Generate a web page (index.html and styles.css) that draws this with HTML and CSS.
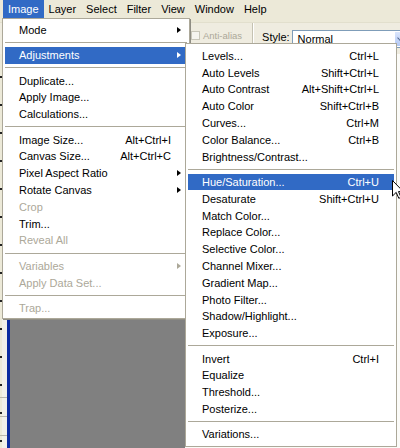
FILE: index.html
```html
<!DOCTYPE html>
<html>
   <head>
      <meta charset="UTF-8">
      <title>Image menu</title>
      <link rel="stylesheet" href="styles.css">
   </head>
   <body>
      <div class="screen">
         <div class="menubar">
            <span class="open">Image</span>
            <span>Layer</span>
            <span>Select</span>
            <span>Filter</span>
            <span>View</span>
            <span>Window</span>
            <span>Help</span>
         </div>
         <div class="optbar">
            <div class="tools"></div>
            <div class="check"><span class="box"></span>Anti-alias</div>
            <span class="vsep"></span>
            <span class="style-label">Style:</span>
            <div class="combo">Normal<span class="combo-btn"></span></div>
         </div>
         <div class="workspace">
            <div class="dock">
               <span></span><span></span><span></span>
            </div>
            <div class="doc-edge"></div>
            <div class="canvas"></div>
            <div class="palettes"></div>
         </div>

         <!-- Image menu -->
         <div class="menu main">
            <div class="item">Mode<i></i><b class="arrow"></b></div>
            <div class="sep"></div>
            <div class="item hot">Adjustments<i></i><b class="arrow"></b></div>
            <div class="sep"></div>
            <div class="item">Duplicate...</div>
            <div class="item">Apply Image...</div>
            <div class="item">Calculations...</div>
            <div class="sep"></div>
            <div class="item">Image Size...<i>Alt+Ctrl+I</i></div>
            <div class="item">Canvas Size...<i>Alt+Ctrl+C</i></div>
            <div class="item">Pixel Aspect Ratio<i></i><b class="arrow"></b></div>
            <div class="item">Rotate Canvas<i></i><b class="arrow"></b></div>
            <div class="item off">Crop</div>
            <div class="item">Trim...</div>
            <div class="item off">Reveal All</div>
            <div class="sep"></div>
            <div class="item off">Variables<i></i><b class="arrow"></b></div>
            <div class="item off">Apply Data Set...</div>
            <div class="sep"></div>
            <div class="item off">Trap...</div>
         </div>

         <!-- Adjustments submenu -->
         <div class="menu sub">
            <div class="item">Levels...<i>Ctrl+L</i></div>
            <div class="item">Auto Levels<i>Shift+Ctrl+L</i></div>
            <div class="item">Auto Contrast<i>Alt+Shift+Ctrl+L</i></div>
            <div class="item">Auto Color<i>Shift+Ctrl+B</i></div>
            <div class="item">Curves...<i>Ctrl+M</i></div>
            <div class="item">Color Balance...<i>Ctrl+B</i></div>
            <div class="item">Brightness/Contrast...</div>
            <div class="sep"></div>
            <div class="item hot">Hue/Saturation...<i>Ctrl+U</i></div>
            <div class="item">Desaturate<i>Shift+Ctrl+U</i></div>
            <div class="item">Match Color...</div>
            <div class="item">Replace Color...</div>
            <div class="item">Selective Color...</div>
            <div class="item">Channel Mixer...</div>
            <div class="item">Gradient Map...</div>
            <div class="item">Photo Filter...</div>
            <div class="item">Shadow/Highlight...</div>
            <div class="item">Exposure...</div>
            <div class="sep"></div>
            <div class="item">Invert<i>Ctrl+I</i></div>
            <div class="item">Equalize</div>
            <div class="item">Threshold...</div>
            <div class="item">Posterize...</div>
            <div class="sep"></div>
            <div class="item">Variations...</div>
         </div>

         <svg class="cursor" width="12" height="19" viewBox="0 0 12 19">
            <path d="M0.5 0.5 L0.5 16 L4.2 12.4 L6.8 18.3 L9 17.3 L6.5 11.6 L11.3 11.6 Z" fill="#fff" stroke="#000" stroke-width="1"/>
         </svg>
      </div>
   </body>
</html>
```

FILE: styles.css
```css
body
{
margin:0; padding:0;
font-family:"Liberation Sans", Arial, sans-serif;
font-size:11px;
color:#000;
}
.screen
{
position:relative;
width:400px; height:448px;
overflow:hidden;
display:flex; flex-direction:column;
background:#ece9d8;
}

/* top menu bar */
.menubar
{
display:flex;
height:18px; line-height:18px;
padding-left:3px;
background:#ece9d8;
}
.menubar span
{
padding:0 5px;
}
.menubar .open
{
background:#316ac5; color:#fff;
}

/* tool options bar */
.optbar
{
display:flex; align-items:flex-start;
height:32px; padding-top:6px;
box-sizing:border-box;
border-top:1px solid #e2dfcd;
margin-top:4px;
background:#efece0;
white-space:nowrap;
}
.optbar > *
{
flex:none;
}
.tools
{
width:191px;
}
.check
{
display:flex; align-items:center;
height:13px; line-height:13px;
font-size:9.5px;
color:#aca899;
}
.check .box
{
width:7px; height:7px;
margin-right:3px;
border:1px solid #c9c7ba;
background:#f6f5f0;
}
.vsep
{
width:1px; height:22px;
margin:-6px 8px 0 10px;
border-right:1px solid #fff;
background:#c5c2b2;
}
.style-label
{
line-height:13px; margin-top:2px;
}
.combo
{
display:flex; align-items:center;
width:115px; height:18px;
margin:1px 0 0 2px;
padding-left:5px;
box-sizing:border-box;
border:1px solid #7f9db9;
background:#fff;
}
.combo-btn
{
margin-left:auto;
width:10px; height:14px;
margin-right:1px;
background:linear-gradient(#dbe6fc,#b2c8f5);
}
.combo-btn::after
{
content:"";
display:block;
width:3px; height:3px;
margin:4px auto 0;
border-right:1.5px solid #4d6185;
border-bottom:1.5px solid #4d6185;
transform:rotate(45deg);
}

/* document area */
.workspace
{
flex:1;
display:flex;
}
.dock
{
width:7px;
display:flex; flex-direction:column; justify-content:flex-end;
gap:18px; padding-bottom:12px;
box-sizing:border-box;
background:
  repeating-linear-gradient(#ece9d8 0 22px, #222 22px 24px, #ece9d8 24px 28px) left top / 2px 100% no-repeat,
  #f1f0ea;
}
.dock span
{
height:1px; background:#b9b7ad;
}
.doc-edge
{
width:3px;
background:#0b2a9f;
}
.canvas
{
flex:1;
background:#808080;
}
.palettes
{
width:215px;
background:#fbfbf8;
}

/* menus */
.menu
{
position:absolute;
box-sizing:border-box;
border:1px solid #aca899;
background:#fff;
}
.main
{
left:2px; top:18px;
width:188px;
padding:2.5px 2px 2px;
box-shadow:1px 1px 0 #8f8d84;
}
.sub
{
left:185px; top:43px;
width:212px;
padding:3.5px 2px 3px;
}
.item
{
display:grid;
grid-template-columns:1fr auto 10px;
align-items:center;
height:16.8px;
padding:0 6px 0 14px;
white-space:nowrap;
}
.sub .item
{
grid-template-columns:1fr auto;
padding-right:15px;
}
.item i
{
font-style:normal;
}
.item .arrow
{
justify-self:end;
width:0; height:0;
border-left:4px solid #000;
border-top:3.5px solid transparent;
border-bottom:3.5px solid transparent;
}
.item.hot
{
background:#316ac5; color:#fff;
}
.item.hot .arrow
{
border-left-color:#fff;
}
.item.off
{
color:#aca899;
}
.item.off .arrow
{
border-left-color:#aca899;
}
.sep
{
height:1px;
margin:3.8px 0;
background:#aca899;
}
.cursor
{
position:absolute;
left:392px; top:180px;
}
```
